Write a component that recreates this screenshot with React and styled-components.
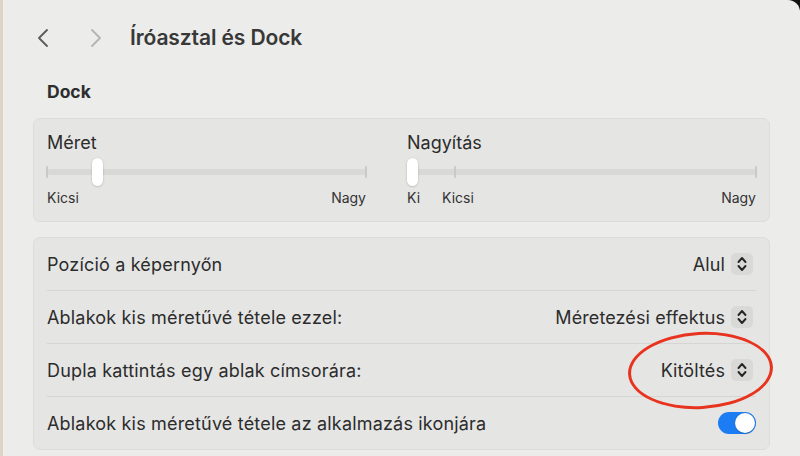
import React from "react";
import styled, { createGlobalStyle } from "styled-components";

const GlobalStyle = createGlobalStyle`
  html, body {
    margin: 0;
    padding: 0;
    background: #111111;
  }
  body {
    font-family: Inter, "Noto Sans", "Liberation Sans", sans-serif;
    color: #2c2c2c;
    -webkit-font-smoothing: antialiased;
  }
`;

function Chevron({ dir, color }) {
  const pts = dir === "left" ? "10,2 2,10 10,18" : "2,2 10,10 2,18";
  return (
    <svg width="12" height="20" viewBox="0 0 12 20">
      <polyline points={pts} fill="none" stroke={color} strokeWidth="1.8" strokeLinecap="round" strokeLinejoin="round" />
    </svg>
  );
}

function UpDown() {
  return (
    <svg width="10" height="16" viewBox="0 0 10 16">
      <polyline points="1.5,6 5,2 8.5,6" fill="none" stroke="#262626" strokeWidth="1.9" strokeLinecap="round" strokeLinejoin="round" />
      <polyline points="1.5,10 5,14 8.5,10" fill="none" stroke="#262626" strokeWidth="1.9" strokeLinecap="round" strokeLinejoin="round" />
    </svg>
  );
}

function Slider({ label, thumb, ticks, labels }) {
  return (
    <SliderBox>
      <SliderLabel>{label}</SliderLabel>
      <Track>
        {ticks.map((t) => (
          <Tick key={t} style={{ left: `${t}%` }} />
        ))}
        <Thumb style={{ left: `${thumb}%` }} />
      </Track>
      <TickLabels>
        {labels.map((l) => (
          <TickLabel key={l.text} $grow={l.grow} $pad={l.pad}>
            {l.text}
          </TickLabel>
        ))}
      </TickLabels>
    </SliderBox>
  );
}

function PopupRow({ label, value, marked }) {
  return (
    <Row>
      <RowLabel>{label}</RowLabel>
      <Popup>
        <span>{value}</span>
        <Stepper>
          <UpDown />
        </Stepper>
        {marked && <Circle />}
      </Popup>
    </Row>
  );
}

export default function App() {
  return (
    <>
      <GlobalStyle />
      <Desktop>
        <Wallpaper />
        <Window>
          <Header>
            <NavButton>
              <Chevron dir="left" color="#5a5a5a" />
            </NavButton>
            <NavButton>
              <Chevron dir="right" color="#b4b4b4" />
            </NavButton>
            <Title>Íróasztal és Dock</Title>
          </Header>
          <SectionTitle>Dock</SectionTitle>
          <SliderCard>
            <Slider
              label="Méret"
              thumb={14}
              ticks={[0, 100]}
              labels={[
                { text: "Kicsi", grow: true },
                { text: "Nagy" },
              ]}
            />
            <Slider
              label="Nagyítás"
              thumb={0}
              ticks={[13.8, 100]}
              labels={[
                { text: "Ki" },
                { text: "Kicsi", grow: true, pad: 22 },
                { text: "Nagy" },
              ]}
            />
          </SliderCard>
          <ListCard>
            <PopupRow label="Pozíció a képernyőn" value="Alul" />
            <PopupRow label="Ablakok kis méretűvé tétele ezzel:" value="Méretezési effektus" />
            <PopupRow label="Dupla kattintás egy ablak címsorára:" value="Kitöltés" marked />
            <Row>
              <RowLabel>Ablakok kis méretűvé tétele az alkalmazás ikonjára</RowLabel>
              <Toggle />
            </Row>
          </ListCard>
        </Window>
      </Desktop>
    </>
  );
}

const Desktop = styled.div`
  display: flex;
  width: 800px;
  height: 456px;
  overflow: hidden;
`;

const Wallpaper = styled.div`
  width: 3px;
  background: #ded4c6;
`;

const Window = styled.div`
  flex: 1;
  background: #ececeb;
  border-top-right-radius: 12px;
  padding: 0 30px 0 30px;
  display: flex;
  flex-direction: column;
`;

const Header = styled.div`
  height: 76px;
  display: flex;
  align-items: center;
  padding-bottom: 1px;
  box-sizing: border-box;
`;

const NavButton = styled.div`
  width: 20px;
  height: 24px;
  display: flex;
  align-items: center;
  margin-right: 31px;
  margin-left: 3px;
  &:first-child {
    margin-left: 4px;
    margin-right: 30px;
  }
`;

const Title = styled.h1`
  margin: 0 0 0 -11px;
  font-size: 21px;
  font-weight: 600;
  color: #383838;
  letter-spacing: -0.1px;
`;

const SectionTitle = styled.h2`
  margin: 0 0 0 14px;
  font-size: 17.5px;
  font-weight: 700;
  color: #2e2e2e;
  height: 42px;
  line-height: 32px;
`;

const Card = styled.div`
  background: #e5e5e4;
  border: 1px solid #dcdcdb;
  border-radius: 7px;
`;

const SliderCard = styled(Card)`
  display: grid;
  grid-template-columns: 319px 1fr;
  column-gap: 41px;
  padding: 13px 13px 0 13px;
  height: 104px;
  box-sizing: border-box;
  margin-bottom: 15px;
`;

const SliderBox = styled.div`
  display: flex;
  flex-direction: column;
`;

const SliderLabel = styled.div`
  font-size: 18px;
  line-height: 22px;
  margin-bottom: 15px;
`;

const Track = styled.div`
  position: relative;
  height: 6px;
  border-radius: 3px;
  background: #d8d8d7;
`;

const Tick = styled.div`
  position: absolute;
  top: -3px;
  width: 2px;
  margin-left: -1px;
  height: 12px;
  border-radius: 1px;
  background: #c9c9c8;
`;

const Thumb = styled.div`
  position: absolute;
  top: -11px;
  width: 11px;
  height: 28px;
  border-radius: 6px;
  background: #ffffff;
  box-shadow: 0 0.5px 2px rgba(0, 0, 0, 0.25);
`;

const TickLabels = styled.div`
  display: flex;
  margin-top: 14px;
  font-size: 14px;
  line-height: 17px;
  color: #333;
`;

const TickLabel = styled.div`
  flex: ${(p) => (p.$grow ? 1 : "none")};
  padding-left: ${(p) => p.$pad || 0}px;
`;

const ListCard = styled(Card)`
  padding: 0 13px;
`;

const Row = styled.div`
  position: relative;
  box-sizing: border-box;
  height: 53px;
  display: flex;
  align-items: center;
  justify-content: space-between;
  border-bottom: 1px solid #d5d5d4;
  &:last-child {
    border-bottom: none;
    height: 52px;
  }
`;

const RowLabel = styled.div`
  font-size: 18px;
  letter-spacing: 0.18px;
  color: #2c2c2c;
`;

const Popup = styled.div`
  position: relative;
  display: flex;
  align-items: center;
  gap: 6px;
  margin-right: 3px;
  font-size: 18px;
  letter-spacing: 0.1px;
  color: #2c2c2c;
`;

const Stepper = styled.div`
  width: 22px;
  height: 22px;
  border-radius: 5px;
  background: #d9d9d8;
  display: flex;
  align-items: center;
  justify-content: center;
`;

const Circle = styled.div`
  position: absolute;
  right: -20px;
  top: 50%;
  width: 145px;
  height: 77px;
  margin-top: -38px;
  border: 3px solid #e8341f;
  border-radius: 50%;
  box-sizing: border-box;
  transform: rotate(-3deg);
`;

const Toggle = styled.div`
  position: relative;
  width: 38px;
  height: 22px;
  border-radius: 11px;
  background: #1c7cf4;
  &::after {
    content: "";
    position: absolute;
    right: 1px;
    top: 1px;
    width: 20px;
    height: 20px;
    border-radius: 50%;
    background: #fff;
    box-shadow: 0 0.5px 1.5px rgba(0, 0, 0, 0.3);
  }
`;
